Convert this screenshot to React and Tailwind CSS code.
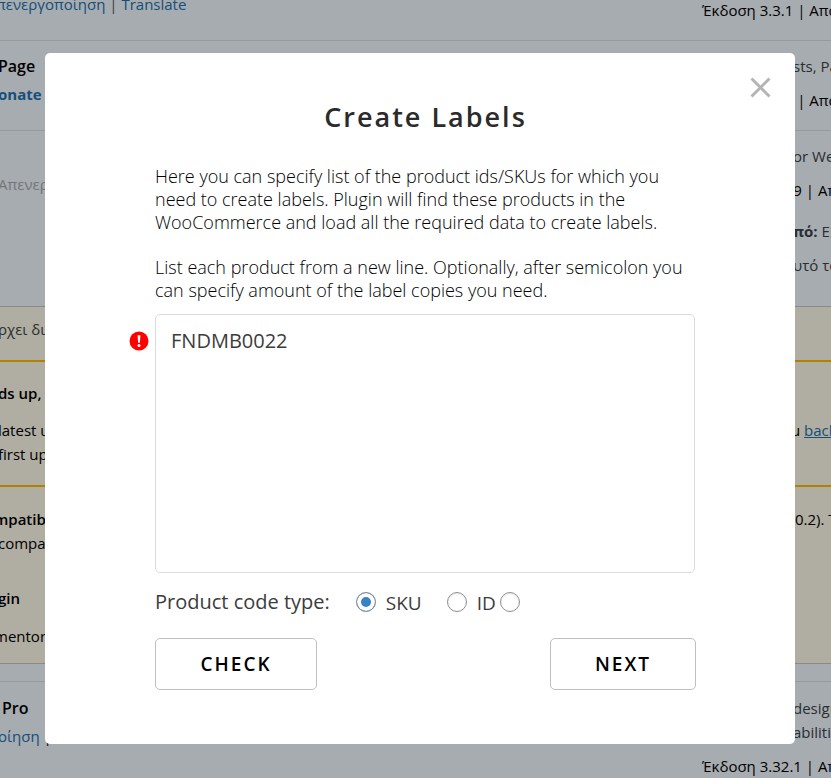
import React, { useState } from 'react';

function TextButton({ children, className, onClick }) {
    return (
        <button type="button" onClick={onClick} className={`h-[52px] rounded-[5px] border border-[#bfbfbf] bg-white text-[19px] font-semibold tracking-[2px] text-black ${className}`}>
            {children}
        </button>
    );
}

function CodeType({ id, label, value, onChange }) {
    return (
        <>
            <input
                type="radio"
                id={id}
                name="code_type"
                checked={value === id}
                onChange={() => onChange(id)}
                aria-label={label || 'Other'}
                className="size-5 shrink-0 appearance-none rounded-full border border-[#8c8f94] bg-white shadow-[inset_0_1px_2px_rgba(0,0,0,0.1)] checked:bg-[#3582c4] checked:shadow-[inset_0_0_0_4px_white]"
            />
            {label && <label htmlFor={id} className="pl-2.5 pt-0.5">{label}</label>}
        </>
    );
}

function CreateLabels() {
    const [codes, setCodes] = useState('FNDMB0022');
    const [codeType, setCodeType] = useState('sku');

    return (
        <form role="dialog" aria-labelledby="labels-title" className="w-full max-w-[750px] rounded-[5px] bg-white pb-[54px] font-['Open_Sans',sans-serif] text-[#3c3c3c]">
            <div className="flex justify-end pr-6 pt-6">
                <button type="button" aria-label="Close" className="size-[21px] text-[#b4b4b4]">
                    <svg viewBox="0 0 21 21" className="size-full" fill="none" stroke="currentColor" strokeWidth="3">
                        <path d="M1.5 1.5 19.5 19.5M19.5 1.5 1.5 19.5" />
                    </svg>
                </button>
            </div>
            <div className="pl-[110px] pr-[99px]">
                <h2 id="labels-title" className="text-center text-[27px] leading-[38px] font-semibold tracking-[2px] text-[#2b2b2b]">Create Labels</h2>
                <div className="mt-[29px] space-y-[22px] text-[18px] leading-[23px] font-light text-black">
                    <p>Here you can specify list of the product ids/SKUs for which you need to create labels. Plugin will find these products in the WooCommerce and load all the required data to create labels.</p>
                    <p>List each product from a new line. Optionally, after semicolon you can specify amount of the label copies you need.</p>
                </div>
                <div className="relative mt-3">
                    <svg viewBox="0 0 20 20" className="absolute top-[17px] -left-[26px] size-5" role="img" aria-label="Error">
                        <circle cx="10" cy="10" r="9.5" fill="#f00" />
                        <path d="M8.6 4.3h2.8l-.5 7.4H9.1z" fill="#fff" />
                        <circle cx="10" cy="14.5" r="1.5" fill="#fff" />
                    </svg>
                    <textarea
                        aria-label="Product codes"
                        value={codes}
                        onChange={(e) => setCodes(e.target.value)}
                        className="block h-[259px] w-[calc(100%-1px)] resize-none rounded-[5px] border border-[#d9dcde] px-[15px] py-3 text-[20px] leading-[28px] outline-none"
                    />
                </div>
                <div className="mt-3.5 flex items-center text-[20px] leading-[28px]">
                    <span className="mr-[26px]">Product code type:</span>
                    <div className="flex items-center text-[19px]">
                        <CodeType id="sku" label="SKU" value={codeType} onChange={setCodeType} />
                        <span className="w-[25px]" />
                        <CodeType id="id" label="ID" value={codeType} onChange={setCodeType} />
                        <span className="w-1" />
                        <CodeType id="other" value={codeType} onChange={setCodeType} />
                    </div>
                </div>
                <div className="mt-[21px] flex justify-between">
                    <TextButton className="w-[162px]">CHECK</TextButton>
                    <TextButton className="w-[146px]">NEXT</TextButton>
                </div>
            </div>
        </form>
    );
}

function Row({ left, right, className }) {
    return (
        <div className={`flex justify-between overflow-hidden whitespace-nowrap ${className}`}>
            <div className="-ml-0.5 w-[200px]">{left}</div>
            <div className="w-[129px]">{right}</div>
        </div>
    );
}

function PluginList() {
    return (
        <div className="overflow-hidden bg-[#f0f6fc] font-['Open_Sans',sans-serif] text-[15px] leading-[24px] text-black">
            <Row
                className="h-[41px] border-b border-black/10"
                left={<p className="-mt-2 -ml-0.5 text-[#50575e]"><a href="#deactivate" className="text-[#2271b1]">πενεργοποίηση</a> | <a href="#translate" className="text-[#2271b1]">Translate</a></p>}
                right={<p className="-mt-0.5">Έκδοση 3.3.1 | Από τον</p>}
            />
            <Row
                className="h-[90px] border-b border-black/10 pt-[13px]"
                left={<><p className="text-[16px] font-semibold">Page</p><a href="#donate" className="block pt-1 font-bold text-[#2271b1]">onate</a></>}
                right={<><p className="pl-[91px] text-[#3c434a]">sts, Pages</p><p className="pt-2.5">Έκδοση 2.3.1 | Από τον</p></>}
            />
            <Row
                className="h-[176px] border-b border-black/20 pt-[13px]"
                left={<p className="pt-7 text-[#a7aaad]">Απενεργοποίηση</p>}
                right={
                    <div className="space-y-2.5">
                        <p className="pl-[91px] text-[#3c434a]">or WeChat</p>
                        <p>Έκδοση 3.30.9 | Από</p>
                        <p className="pl-[91px] pt-[7px] text-[#3c434a]"><b>πό:</b> Elementor</p>
                        <p className="pl-[91px] text-[#3c434a]">υτό το</p>
                    </div>
                }
            />
            <div className="border-b border-black/20 bg-[#fcf9e8]">
                <Row className="h-[55px] border-b-2 border-[#ffb900] pt-2.5" left={<p className="text-[#3c434a]">ρχει διαθέσιμη</p>} />
                <Row
                    className="h-[125px] border-b-2 border-[#ffb900] pt-[19px]"
                    left={<><p className="font-semibold">ds up, Please</p><p className="pt-[13px]">latest update</p><p>first upgrade</p></>}
                    right={<p className="pl-[89px] pt-[37px]">u <a href="#backup" className="text-[#2271b1] underline">backup</a></p>}
                />
                <Row
                    className="h-[176px] pt-5"
                    left={<><p className="-ml-1 font-semibold">mpatibility</p><p>compatible</p><p className="pt-[31px] font-semibold">gin</p><p className="-ml-1 pt-3.5">mentor</p></>}
                    right={<p className="pl-[93px]">0.2). To</p>}
                />
            </div>
            <Row
                className="mt-[17px] border-t border-black/10 pt-3.5"
                left={<><p className="pl-1 text-[16px] font-semibold">Pro</p><p className="pt-1"><a href="#activate" className="text-[#2271b1]">οίηση</a> |</p></>}
                right={<><p className="pl-[91px] text-[#3c434a]">design</p><p className="pl-[91px] text-[#3c434a]">abilities</p><p className="pt-2.5">Έκδοση 3.32.1 | Από</p></>}
            />
        </div>
    );
}

function App() {
    return (
        <div className="relative">
            <PluginList />
            <div className="absolute inset-0 flex items-start justify-center overflow-hidden bg-black/30 pt-[53px] pr-9 pl-[45px]">
                <CreateLabels />
            </div>
        </div>
    );
}

export default App;
